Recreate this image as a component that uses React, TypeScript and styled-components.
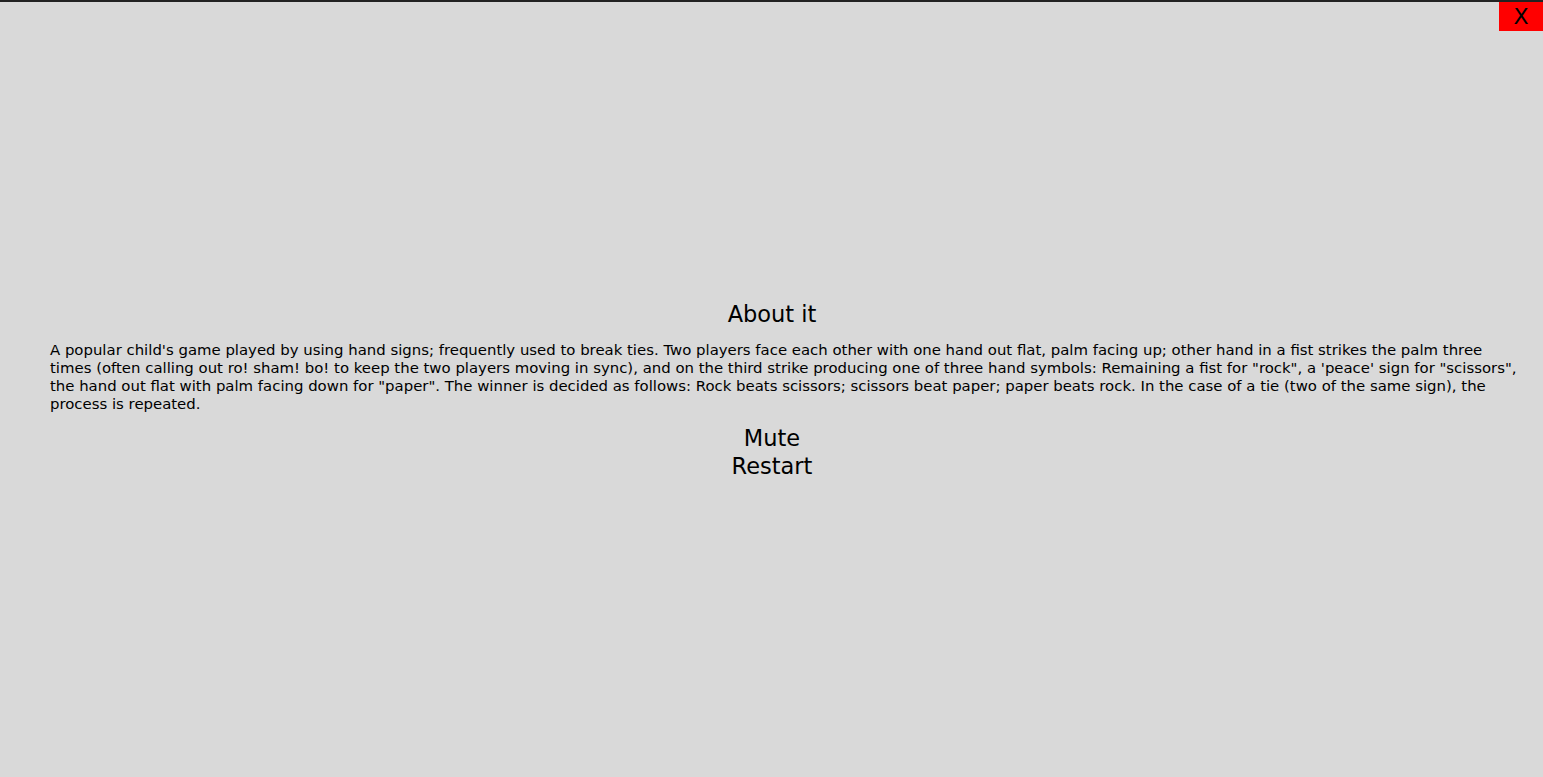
import React from "react";
import styled, { createGlobalStyle } from "styled-components";

const Global = createGlobalStyle`
  html, body { margin: 0; padding: 0; }
  body { background: #d9d9d9; font-family: "DejaVu Sans", "Noto Sans", sans-serif; color: #000; }
`;

const Screen = styled.div`
  box-sizing: border-box;
  height: 777px;
  border-top: 2px solid #222222;
  display: flex;
  flex-direction: column;
  align-items: center;
  justify-content: center;
  padding: 0 49px 0 50px;
  position: relative;
`;

const Close = styled.button`
  position: absolute;
  top: 0;
  right: 0;
  width: 44px;
  height: 29px;
  background: #ff0000;
  border: none;
  padding: 0;
  font-family: "DejaVu Sans", sans-serif;
  font-size: 22px;
  line-height: 29px;
  color: #000;
  cursor: pointer;
`;

const Title = styled.h2`
  margin: 0 0 13px;
  font-size: 22.5px;
  font-weight: 400;
  line-height: 28px;
`;

const Text = styled.p`
  align-self: stretch;
  margin: 0 -24px 11px 0;
  font-size: 14.9px;
  line-height: 18px;
  text-align: left;
`;

const Action = styled.div`
  font-size: 22.5px;
  line-height: 28px;
  cursor: pointer;
`;

export default function App() {
  return (
    <>
      <Global />
      <Screen>
        <Close>X</Close>
        <Title>About it</Title>
        <Text>
          A popular child's game played by using hand signs; frequently used to break ties. Two players face each other with one hand out flat, palm facing up; other hand in a fist strikes the palm three times (often calling out ro! sham! bo! to keep the two players moving in sync), and on the third strike producing one of three hand symbols: Remaining a fist for "rock", a 'peace' sign for "scissors", the hand out flat with palm facing down for "paper". The winner is decided as follows: Rock beats scissors; scissors beat paper; paper beats rock. In the case of a tie (two of the same sign), the process is repeated.
        </Text>
        <Action>Mute</Action>
        <Action>Restart</Action>
      </Screen>
    </>
  );
}
